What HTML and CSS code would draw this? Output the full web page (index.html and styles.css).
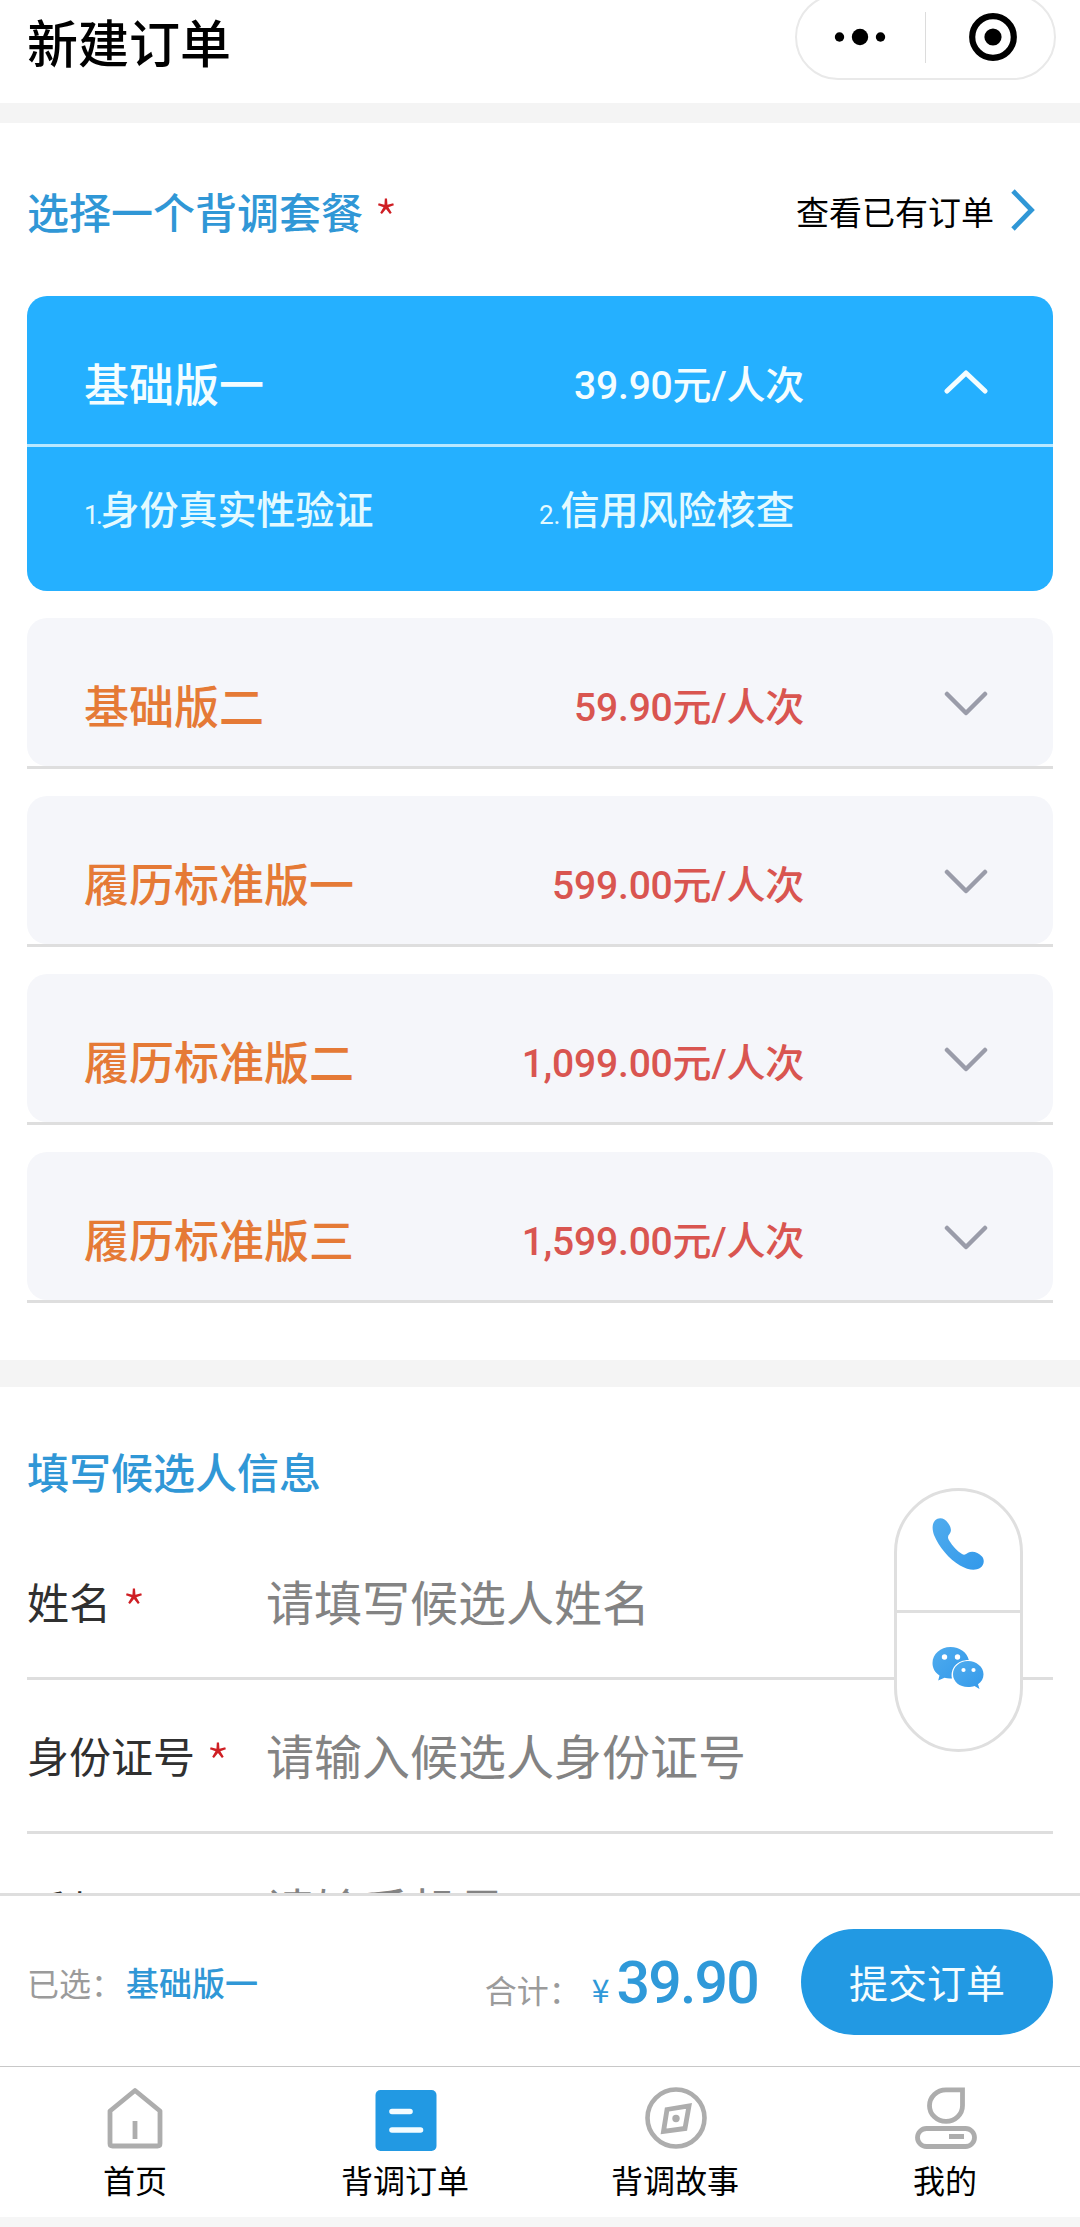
FILE: index.html
```html
<!DOCTYPE html>
<html lang="zh-CN">
<head>
<meta charset="utf-8">
<title>新建订单</title>
<link rel="stylesheet" href="styles.css">
</head>
<body>
<div class="app">
  <header class="topbar">
    <h1 class="topbar-title">新建订单</h1>
    <div class="capsule">
      <svg class="capsule-more" viewBox="0 0 52 20"><circle cx="5.5" cy="10" r="4.7"/><circle cx="26" cy="10" r="8.2"/><circle cx="46.5" cy="10" r="4.7"/></svg>
      <span class="capsule-split"></span>
      <svg class="capsule-close" viewBox="0 0 48 48"><circle cx="24" cy="24" r="20.8" fill="none" stroke="#000" stroke-width="6.2"/><circle cx="24" cy="24" r="8.6"/></svg>
    </div>
  </header>

  <section class="packages">
    <div class="packages-head">
      <h2 class="section-title">选择一个背调套餐<span class="required">*</span></h2>
      <a class="orders-link">查看已有订单
        <svg viewBox="0 0 24 42"><path d="M2 2 20.500 21 2 40" fill="none" stroke="#3097d6" stroke-width="4.800"/></svg>
      </a>
    </div>
    <div class="package-list">
      <article class="package active">
        <div class="package-row">
          <span class="package-name">基础版一</span><span class="package-price">39.90元/人次</span>
          <svg class="chevron" viewBox="0 0 44 26"><path d="M3 22 22 4 41 22"/></svg>
        </div>
        <ol class="package-items">
          <li><small class="first">1.</small>身份真实性验证</li>
          <li><small>2.</small>信用风险核查</li>
        </ol>
      </article>
      <article class="package">
        <div class="package-row">
          <span class="package-name">基础版二</span><span class="package-price">59.90元/人次</span>
          <svg class="chevron" viewBox="0 0 44 26"><path d="M3 3 22 22 41 3"/></svg>
        </div>
      </article>
      <article class="package">
        <div class="package-row">
          <span class="package-name">履历标准版一</span><span class="package-price">599.00元/人次</span>
          <svg class="chevron" viewBox="0 0 44 26"><path d="M3 3 22 22 41 3"/></svg>
        </div>
      </article>
      <article class="package">
        <div class="package-row">
          <span class="package-name">履历标准版二</span><span class="package-price">1,099.00元/人次</span>
          <svg class="chevron" viewBox="0 0 44 26"><path d="M3 3 22 22 41 3"/></svg>
        </div>
      </article>
      <article class="package">
        <div class="package-row">
          <span class="package-name">履历标准版三</span><span class="package-price">1,599.00元/人次</span>
          <svg class="chevron" viewBox="0 0 44 26"><path d="M3 3 22 22 41 3"/></svg>
        </div>
      </article>
    </div>
  </section>

  <section class="candidate">
    <h2 class="section-title">填写候选人信息</h2>
    <div class="field"><span class="field-label">姓名<span class="required">*</span></span><span class="field-hint">请填写候选人姓名</span></div>
    <div class="field"><span class="field-label">身份证号<span class="required">*</span></span><span class="field-hint">请输入候选人身份证号</span></div>
    <div class="field"><span class="field-label">手机号<span class="required">*</span></span><span class="field-hint">请输手机号</span></div>
  </section>

  <div class="checkout">
    <span class="picked-label">已选：</span><span class="picked-name">基础版一</span>
    <div class="total"><span class="total-label">合计：</span><span class="total-sign">¥</span><span class="total-sum">39.90</span></div>
    <button class="submit">提交订单</button>
  </div>

  <nav class="tabs">
    <a class="tab">
      <svg viewBox="0 0 62 62"><path d="M5 24 30 3.500 55 24V56.500Q55 59 52.500 59H7.500Q5 59 5 56.500ZM30 34V52" fill="none" stroke="#adadad" stroke-width="4.800" stroke-linejoin="round"/></svg>
      <span>首页</span>
    </a>
    <a class="tab">
      <svg viewBox="0 0 62 62"><rect x=".5" y="3" width="61" height="61" rx="5" fill="#2299e3"/><path d="M17 24.500H35M17 43H45.500" stroke="#f4fcff" stroke-width="5.600" stroke-linecap="round"/></svg>
      <span>背调订单</span>
    </a>
    <a class="tab">
      <svg viewBox="0 0 62 62"><g fill="none" stroke="#adadad"><circle cx="31" cy="31" r="28.500" stroke-width="4.600"/><path d="M22 22.500 44 19 40 41.500 18.500 44.500Z" stroke-width="4.800"/></g><circle cx="31" cy="31.500" r="3.700" fill="#adadad"/></svg>
      <span>背调故事</span>
    </a>
    <a class="tab">
      <svg viewBox="0 0 62 62"><g fill="none" stroke="#adadad" stroke-width="4.800"><path d="M31 2.800H47.500V18.500A16.500 15.800 0 1 1 31 2.800Z"/><rect x="2.500" y="41.500" width="57" height="18" rx="9"/></g><path d="M34 49.500H49" stroke="#adadad" stroke-width="5"/></svg>
      <span>我的</span>
    </a>
  </nav>

  <aside class="contact">
    <a class="contact-phone">
      <svg viewBox="0 0 52 52"><defs><linearGradient id="blue" x1="0" y1="0" x2="1" y2="1"><stop offset="0" stop-color="#50acee"/><stop offset="1" stop-color="#3399ea"/></linearGradient></defs><path fill="url(#blue)" d="M3 2.500C7-1.500 13 .2 16 5C19 9 20 13 17.500 16C15.500 18 15.500 20 17.500 23C20.500 28 25 33 30 36C32.500 37.500 34 36 36 34.800C40 32.500 46 34 50 38.500C53 42 52 47 48 50C43 53 36 52 28 47.500C17 41 7 29 2 17C0 11 0 6 3 2.500Z"/></svg>
    </a>
    <a class="contact-wechat">
      <svg viewBox="0 0 52 42"><path fill="url(#blue)" d="M18.500 0C8.500 0 .5 7 .5 16C.5 21.500 3 25.500 7.500 28.500L6.200 33.500L12.500 30.800C15 31.500 17 31.700 20 31.500C18 21.500 25 13 36.800 13C35 5.500 28 0 18.500 0Z"/><path fill="url(#blue)" d="M36 14C27.500 14 21 20 21 27.200C21 34.500 27.500 40 36 40C38.500 40 40.500 39.600 42.500 39L47.500 42L46 37.300C49.500 34.800 51.500 31.500 51.500 27.200C51.500 20 44.500 14 36 14Z"/><g fill="#fff"><circle cx="12.500" cy="10" r="2.700"/><circle cx="25.500" cy="10" r="2.700"/><circle cx="31.500" cy="23" r="2.100"/><circle cx="41.500" cy="23" r="2.100"/></g></svg>
    </a>
  </aside>
</div>
</body>
</html>
```
FILE: styles.css
```css
* { box-sizing: border-box; }
body { margin: 0; background: #f6f6f6; font-family: "Noto Sans CJK SC", sans-serif; color: #000; }
h1, h2, ol { margin: 0; padding: 0; font-weight: 500; }
svg { display: block; flex: none; }

.app { position: relative; display: flex; flex-direction: column; width: 1080px; height: 2227px; padding-bottom: 10px; overflow: hidden; }

.topbar { flex: none; display: flex; justify-content: space-between; align-items: flex-start; height: 123px; padding: 0 24px 0 27px; background: #fff; border-bottom: 20px solid #f4f4f4; }
.topbar-title { margin-top: 11px; font-size: 51px; line-height: 60px; }
.capsule { display: flex; align-items: center; width: 261px; height: 86px; margin-top: -6px; padding: 0 37px; border: 2px solid #e9e9e9; border-radius: 43px; }
.capsule-more { width: 52px; height: 20px; }
.capsule-split { width: 1px; height: 51px; margin-left: 39px; background: #dcdcdc; }
.capsule-close { width: 48px; height: 48px; margin-left: 43px; }

.packages { flex: none; height: 1264px; padding: 0 27px; background: #fff; border-bottom: 27px solid #f4f4f4; }
.packages-head { display: flex; justify-content: space-between; align-items: center; height: 173px; padding: 3px 18px 0 0; }
.section-title { font-size: 42px; line-height: 60px; color: #3097d6; }
.required { margin-left: 11px; font-size: 54px; line-height: 0; vertical-align: -12px; color: #cf1f24; font-weight: 300; }
.orders-link { display: flex; align-items: center; gap: 17px; font-size: 33px; line-height: 48px; }
.orders-link svg { width: 24px; height: 42px; margin-top: -3px; }

.package-list { display: flex; flex-direction: column; gap: 27px; }
.package { border-bottom: 3px solid #dedede; }
.package-row { display: flex; align-items: center; height: 148px; padding: 25px 65px 0 57px; border-radius: 20px; background: #f5f6fa; }
.package-name { flex: 1; font-size: 45px; line-height: 60px; font-weight: 500; color: #e57a36; }
.package-price { margin-top: 7px; font: 500 39px/56px Roboto, "Noto Sans CJK SC", sans-serif; letter-spacing: -.2px; color: #d95550; }
.chevron { width: 44px; height: 26px; margin: -1px 0 0 140px; fill: none; stroke: #9a9ca9; stroke-width: 4.5; stroke-linecap: round; stroke-linejoin: round; }
.package.active { border: 0; border-radius: 20px; background: #25b0ff; }
.active .package-row { height: 151px; padding-bottom: 0; border-bottom: 3px solid #b9e8ff; border-radius: 0; background: none; }
.active .package-name, .active .package-price { color: #f4fdff; }
.active .chevron { stroke: #f4fdff; stroke-width: 5; }
.package-items { display: grid; grid-template-columns: 455px 1fr; height: 144px; padding: 32px 0 0 57px; list-style: none; font-size: 39px; line-height: 56px; color: #e4faff; }
.package-items small { font: 26px Roboto, sans-serif; }
.package-items .first { letter-spacing: -2.5px; }

.candidate { flex: 1; min-height: 0; padding: 54px 27px 0; overflow: hidden; background: #fff; }
.candidate .section-title { height: 85px; }
.field { display: flex; align-items: center; height: 154px; padding-bottom: 4px; border-bottom: 3px solid #dedede; }
.field-label { flex: 0 0 239px; padding-top: 3px; font-size: 42px; line-height: 60px; color: #303030; white-space: nowrap; }
.field-hint { font-size: 48px; line-height: 70px; color: #838383; }

.checkout { flex: none; display: flex; align-items: center; height: 173px; padding: 1px 27px 0; background: #fff; border-top: 3px solid #dedede; }
.picked-label, .total-label { font-size: 32px; color: #9b9b9b; }
.picked-name { margin-left: 3px; font-size: 33px; font-weight: 500; color: #3097d6; }
.total { flex: 1; display: flex; justify-content: flex-end; align-items: baseline; padding-top: 3px; color: #2f99d9; }
.total-sign { margin-left: 11px; font-size: 32px; }
.total-sum { margin: 0 43px 0 7px; font: 500 59px/70px Roboto, sans-serif; letter-spacing: -1.8px; }
.submit { width: 252px; height: 106px; padding: 0 0 2px; border: 0; border-radius: 53px; background: #2299e3; color: #f4fdff; font: 39px "Noto Sans CJK SC", sans-serif; }

.tabs { flex: none; display: grid; grid-template-columns: repeat(4, 1fr); height: 151px; padding-top: 20px; background: #fff; border-top: 1px solid #c8c8c8; }
.tab { display: flex; flex-direction: column; align-items: center; gap: 6px; font-size: 32px; line-height: 48px; }
.tab svg { width: 62px; height: 62px; margin-left: 2px; overflow: visible; }

.contact { position: absolute; left: 894px; top: 1488px; width: 129px; height: 264px; border: 3px solid #dfdfdf; border-radius: 65px; background: #fff; }
.contact a { display: flex; justify-content: center; padding-right: 1px; }
.contact-phone { height: 122px; padding-top: 27px; border-bottom: 3px solid #dfdfdf; }
.contact-phone svg { width: 52px; height: 52px; }
.contact-wechat { padding-top: 34px; }
.contact-wechat svg { width: 52px; height: 42px; }
```
